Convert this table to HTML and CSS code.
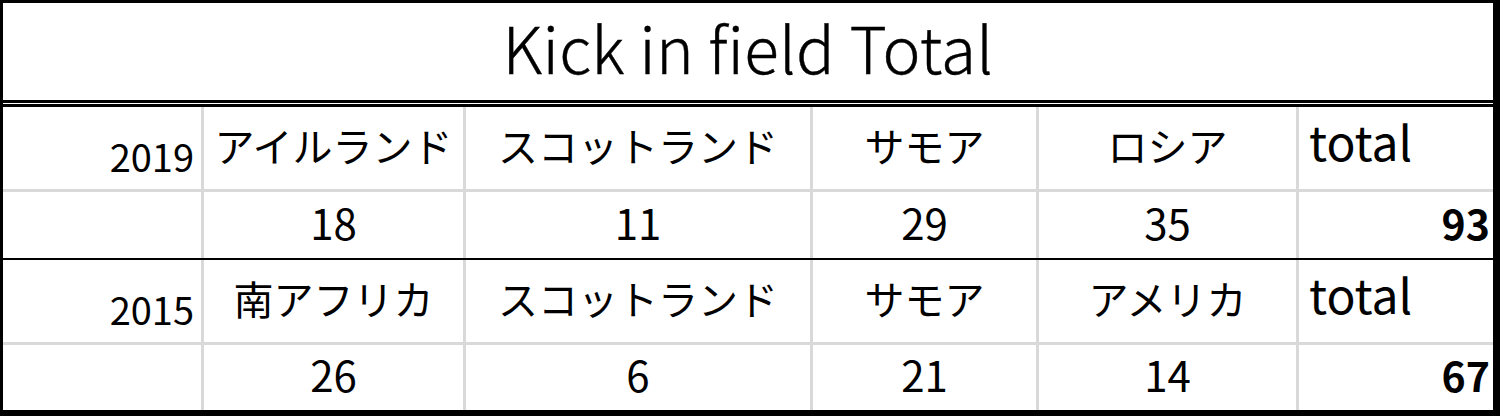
FILE: index.html
```html
<!DOCTYPE html>
<html lang="ja">
<head>
<meta charset="utf-8">
<title>Kick in field Total</title>
<link rel="stylesheet" href="styles.css">
</head>
<body>
<div class="sheet">
  <div class="title">Kick in field Total</div>
  <div class="body">
    <div class="block">
      <div class="cell year">2019</div>
      <div class="cell name">アイルランド</div>
      <div class="cell name">スコットランド</div>
      <div class="cell name">サモア</div>
      <div class="cell name">ロシア</div>
      <div class="cell label">total</div>
      <div class="cell"></div>
      <div class="cell num">18</div>
      <div class="cell num">11</div>
      <div class="cell num">29</div>
      <div class="cell num">35</div>
      <div class="cell sum">93</div>
    </div>
    <div class="block second">
      <div class="cell year">2015</div>
      <div class="cell name">南アフリカ</div>
      <div class="cell name">スコットランド</div>
      <div class="cell name">サモア</div>
      <div class="cell name">アメリカ</div>
      <div class="cell label">total</div>
      <div class="cell"></div>
      <div class="cell num">26</div>
      <div class="cell num">6</div>
      <div class="cell num">21</div>
      <div class="cell num">14</div>
      <div class="cell sum">67</div>
    </div>
  </div>
</div>
</body>
</html>
```
FILE: styles.css
```css
* { box-sizing: border-box; }
html, body { margin: 0; padding: 0; background: #fff; }
body {
  font-family: "Noto Sans CJK JP", "Noto Sans", sans-serif;
  color: #000;
}
.sheet {
  width: 1500px;
  height: 416px;
  border-style: solid;
  border-color: #000;
  border-width: 3px 7px 6px 3px;
  display: flex;
  flex-direction: column;
  gap: 1px;
  background: #fff;
}
.title {
  height: 100px;
  border-bottom: 3px solid #000;
  font-size: 64px;
  font-weight: 300;
  line-height: 1;
  text-align: center;
  padding-top: 11px;
  letter-spacing: 0.2px;
  -webkit-text-stroke: 0.4px #000;
}
.body {
  border-top: 3px solid #000;
  display: flex;
  flex-direction: column;
}
.block {
  display: grid;
  grid-template-columns: 198px 259px 344px 223px 257px 194px;
  grid-template-rows: 82px 66px;
  gap: 3px;
  background: #d9d9d9;
}
.block.second {
  border-top: 2px solid #000;
  grid-template-rows: 82px 65px;
}
.cell {
  background: #fff;
  display: flex;
  align-items: center;
  justify-content: center;
  line-height: 1.2;
  white-space: nowrap;
}
.year {
  font-size: 38px;
  justify-content: flex-end;
  align-items: flex-end;
  padding-right: 7px;
  padding-bottom: 10px;
}
.name {
  font-size: 40px;
  padding-bottom: 7px;
}
.label {
  font-size: 48px;
  justify-content: flex-start;
  padding-left: 10px;
  padding-bottom: 14px;
}
.num {
  font-size: 42px;
  padding-bottom: 6px;
}
.sum {
  font-size: 41px;
  font-weight: 700;
  justify-content: flex-end;
  padding-right: 3px;
  padding-bottom: 5px;
}
```
